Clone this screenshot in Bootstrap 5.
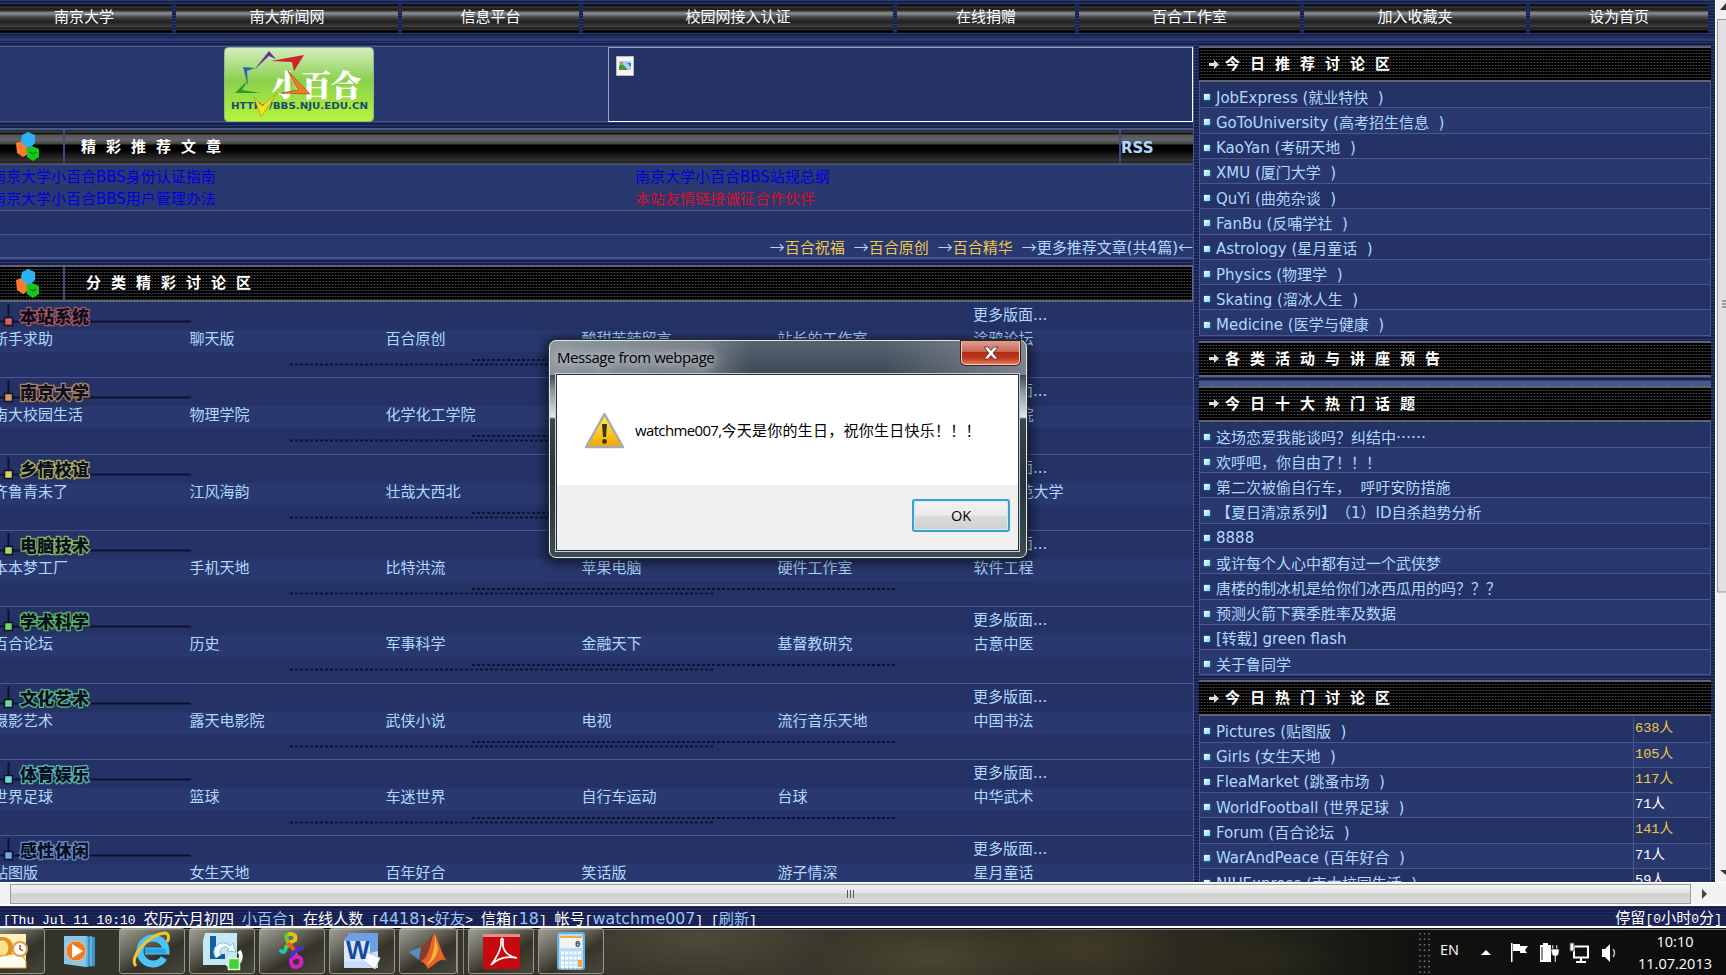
<!DOCTYPE html>
<html lang="zh-CN">
<head>
<meta charset="utf-8">
<title>小百合BBS</title>
<meta name="viewport" content="width=device-width, initial-scale=1">
<link href="https://cdn.jsdelivr.net/npm/bootstrap@5.3.0/dist/css/bootstrap.min.css" rel="stylesheet">
<style>
:root{--line:#48588f;--deep:#243266;--lift:#29396f;--ink:#b0d8ff}
body{width:1726px;height:975px;overflow:hidden;font:15px/20px "DejaVu Sans","Noto Sans CJK SC",sans-serif;color:var(--ink);background:#1a2350;position:relative;text-spacing-trim:space-all}
a{color:inherit;text-decoration:none}
.cjk{font-family:"Noto Sans CJK SC",sans-serif}
.stripes{background:repeating-linear-gradient(#2a3970 0 1px,#18214e 1px 3px)}
.viewport{height:882px}
.page-area{width:1715px}
.topnav{height:38px;padding-top:4px;padding-right:7px}
.topnav a{height:29px;line-height:27px;color:#fff;margin-left:4px;text-align:center;background:linear-gradient(#111 0 2px,#3c3c3e 3px,#1b1b1b 5px,#353536 7px,#77777a 8px,#8a8a8e 10px,#565658 12px,#2c2c2d 16px,#202020 18px,#3a3a3a 22px,#444 23px,#050505 24px,#3c3c3c 25px,#000 27px 28px,#111)}
.topnav a:first-child{margin-left:0;padding-right:4px}
.rule-gap{height:8px;background:linear-gradient(#2b3a72 0 3px,#171f4a 3px 4px,#2a3970 4px 5px,#171f4a 5px 7px,#2a3970 7px)}
.main-col{width:1193px}
.banner{height:76px;border-top:1px solid var(--line);border-bottom:1px solid var(--line);background:var(--lift)}
.logo-cell{width:608px;padding-left:224px}
.logo-cell svg{display:block;width:150px;height:75px}
.ad-box{width:585px;height:75px;border:1px solid #fff;border-top-color:#9aa3bd;border-left-color:#9aa3bd;background:var(--deep);padding:8px 7px}
.gap-stripe{height:6px}
.gap-stripe.short{height:5px}
.gap-stripe.slim{height:4px}
.glossy{height:37px;border-top:2px solid var(--line);border-bottom:1px solid var(--line);color:#fff;font-weight:700;background:linear-gradient(#2a2a2a 0 1px,#4a4a4a 2px,#151515 3px 4px,#555558 5px,#646467 10px,#404042 14px,#000 15px 20px,#101010 23px,#262626 28px,#383838 31px,#111 32px,#444 33px)}
.rss{width:74px;color:var(--ink);border-left:2px solid #414b78;padding-top:2px}
.mesh{height:36px;border-top:2px solid #5f6372;border-bottom:2px solid #5f6372;color:#fff;font-weight:700;background:repeating-linear-gradient(90deg,rgba(0,0,0,.62) 0 2px,transparent 2px 3px),repeating-linear-gradient(#000 0 2px,#4a4a4a 2px 3px),#111}
.mesh.main-mesh{height:37px;border-right:1px solid #5f6372}
.spaced{letter-spacing:10px;white-space:nowrap}
.ball-cell{width:65px;border-right:2px solid #414b78;padding-top:2px}
.ball-cell svg{display:block}
.intro{height:46px;background:var(--lift);color:#0000e0;padding-top:1px;white-space:nowrap;border-bottom:1px solid var(--line)}
.intro>div{line-height:22px}
.intro-left{width:635px}
.pull{margin-left:-9px}
.red-link{color:#d8102c}
.blank-row{height:24px;background:var(--deep);border-bottom:1px solid var(--line)}
.links-row{height:24px;background:var(--lift);border-bottom:2px solid var(--line);line-height:23px;white-space:nowrap;gap:9px}
.gold{color:#efc84a}
.sec{height:76.33px;background:var(--deep);border-bottom:1.5px solid var(--line)}
.sec-head{height:28px}
.sec-head svg{display:block;width:195px;height:28px;overflow:visible}
.sec-head a{width:220px;line-height:27px}
.sec-cells{height:22px;line-height:19px;white-space:nowrap;background:var(--lift)}
.sec-cells a{width:196px;flex:none}
.sec-cells a:first-child{margin-left:-7px;width:196.5px}
.sec-badge{font-weight:900;font-size:17px}
.dots{height:8px;margin-top:6px;display:block}
#cat-title{margin-left:21px;margin-top:-2px}
.side-gutter{width:6px;border-left:1px solid var(--line)}
.side{width:512px}
.side-title{padding-left:10px}
.side-title svg{margin-right:6px}
.light-gap{height:5px;background:var(--line)}
.side-list{margin:0;padding:1px 0 0;list-style:none;border-left:1px solid var(--line);border-right:1px solid var(--line);background:var(--deep)}
.side-list li{height:25.27px;border-bottom:1.5px solid var(--line);background:var(--lift);display:flex;align-items:center;padding-left:4px;line-height:23px;white-space:nowrap}
.side-list li:nth-child(odd){background:var(--deep)}
.side-list li:before{content:"";width:6px;height:6px;background:linear-gradient(135deg,#fff,#6fd6f2);box-shadow:0 0 2px #39a9d8;margin-right:6px;margin-top:4px;flex:none}
.side-list li>.label-text{padding-top:6px}
.pop{margin-left:auto;width:77px;height:100%;border-left:1px solid var(--line);padding-left:1px;font-family:"Liberation Mono","Noto Sans CJK SC",monospace;font-size:13.6px;line-height:24px;color:#fff}
.pop.gold{color:#efc84a}
.vbar{width:11px;height:882px;background:#f0f0f0;border-left:1px solid #fff}
.hbar{height:24px;background:#f2f2f2;border-top:1px solid #fff;padding:1px 15px 0 10px;border-bottom:2px solid #fff}
.thumb{height:20px;width:1682px;border:1px solid #9b9b9b;background:linear-gradient(#f2f2f2,#e2e2e2 45%,#cfcfd1 50%,#dadada)}
.status{height:20px;background:repeating-linear-gradient(#202c60 0 1px,#171f4c 1px 3px);color:#fff;font:13px/26px "Liberation Mono","Noto Sans CJK SC",monospace;white-space:pre;padding:0 4px 0 3px;overflow:hidden}
.status .cj{font-size:15.1px}
.status .ln{color:#9cc4f8;font-family:"DejaVu Sans","Noto Sans CJK SC",sans-serif;font-size:15.2px}
.status .num{font-size:15.8px}
.taskbar{height:49px;border-top:2px solid #fff;background:radial-gradient(ellipse 130px 40px at 700px 10px,#4c4a38,transparent),radial-gradient(ellipse 120px 40px at 930px 30px,#494630,transparent),radial-gradient(ellipse 100px 40px at 1080px 20px,#413c27,transparent),radial-gradient(ellipse 90px 30px at 1250px 30px,#2b2a1b,transparent),linear-gradient(90deg,#33332a 0,#3b392d 45%,#2b291f 70%,#11120f 82%,#0b0c0d);color:#fff;box-shadow:inset 0 1px #111,inset 0 2px #777}
.tb{width:66px;height:46px;margin-left:4px;border:1px solid #99968c;border-radius:3px;background:linear-gradient(150deg,rgba(225,225,215,.62),rgba(120,118,105,.5) 42%,rgba(50,48,38,.5) 60%,rgba(90,88,75,.5));display:flex;justify-content:center;align-items:center;flex:none}
.tb svg{display:block}
.tb.first{margin-left:-21px}
.tb.plain{border-color:transparent;background:none;margin-left:2px;margin-right:2px}
.tb.mat{width:58px}
.stack{width:7px;height:46px;border-right:1px solid #8b887c;border-left:1px solid #8b887c}
.tray{font:14.5px/22px "Open Sans","Noto Sans",sans-serif}
.en{margin:11px 0 0 9px;width:41px}
.icons{margin-top:13px;margin-right:4px}
.clock{width:100px;margin-top:3px;margin-right:1px}
.dlg{position:absolute;left:549px;top:340px;width:478px;height:218px;border-radius:7px;border:1px solid #dfe6ea;background:linear-gradient(90deg,rgba(150,158,166,.9),rgba(130,138,146,.8) 32%,rgba(60,74,92,0) 42%,rgba(70,82,98,0) 70%,rgba(140,146,154,.8)) 0 0/100% 34px no-repeat,linear-gradient(#58636f 0,#3b4857 34px,#8c959c 50px,#e2e6e8 76px,#3a464e 78px,#26343c 140px,#3d4b53);box-shadow:0 0 0 1px #222c33,0 2px 12px 4px rgba(0,0,0,.55);padding:0 7px 7px 6px;font:15px/20px "Open Sans","Noto Sans CJK SC",sans-serif;color:#000}
.dlg-title{height:33px;line-height:33px}
.dlg-title span{letter-spacing:-.45px;padding-left:1px;text-shadow:0 0 8px #cfd5da,0 0 12px #cfd5da}
.dlg-close{width:59px;height:24px;border:1px solid #f0d0c8;border-top:0;border-radius:0 0 5px 5px;background:linear-gradient(#dda093,#cc6a58 45%,#b02c14 50%,#c03a1e 75%,#e07a58);box-shadow:0 0 0 1px #3b2020;margin-right:-1px;display:flex;justify-content:center;align-items:center}
.dlg-body{height:177px;border:1px solid #27333b;outline:1px solid #c7d0d6;background:#fff}
.dlg-msg{height:110px;padding-left:27px;white-space:nowrap}
.msg-text{margin-left:10px;letter-spacing:.25px}
.msg-text span{letter-spacing:-.65px}
.dlg-foot{height:65px;background:#f0f0f0;padding:14px 8px 0 0;display:flex;justify-content:flex-end}
.dlg-foot button{width:98px;height:33px;border:2px solid #3ca0c8;border-radius:3px;background:linear-gradient(#f2f2f2,#ebebeb 48%,#dcdcdc 52%,#cfcfcf);padding:0;font-size:14.5px;color:#000;box-shadow:inset 0 0 0 1px #c9eefb}
</style>
</head>
<body class="d-flex flex-column">
<svg width="0" height="0" class="position-absolute"><defs>
 <linearGradient id="lg" x2="0" y2="1"><stop stop-color="#d5efc0"/><stop offset=".45" stop-color="#8bd04d"/><stop offset="1" stop-color="#b7f53a"/></linearGradient>
 <symbol id="balls" viewBox="0 0 24 30"><path d="M0 11l6-2 6 4v9l-5 3-6-4z" fill="#ff7a2e"/><path d="M6 3l6-3 7 3v8l-5 5-7-3-2-5z" fill="#29b2f6"/><path d="M10 17l6-3 7 3v8l-6 4-6-4z" fill="#14c81c"/><path d="M14 20l3 2 3-2" stroke="#087a10" stroke-width="1.500" fill="none"/></symbol>
 <symbol id="arr" viewBox="0 0 10 9"><path d="M0 3h5V0l5 4.500L5 9V6H0z" fill="#ddd"/></symbol>
</defs></svg>

<div class="viewport d-flex overflow-hidden">
 <div class="page-area stripes">
  <nav class="topnav d-flex stripes" id="topnav"></nav>
  <div class="rule-gap"></div>
  <div class="d-flex">
   <main class="main-col">
    <div class="banner d-flex">
     <div class="logo-cell">
      <svg viewBox="0 0 150 75"><rect x=".5" y=".5" width="149" height="74" rx="4" fill="url(#lg)" stroke="#8db98a"/>
       <text x="48" y="49" font-family="Noto Serif CJK SC,Noto Sans CJK SC,sans-serif" font-weight="900" font-size="30" fill="#fff" textLength="89" stroke="#fff" stroke-width=".4">小百合</text>
       <text x="7" y="61.500" font-family="DejaVu Sans,sans-serif" font-weight="700" font-size="8.500" fill="#1b4b6a" textLength="137" lengthAdjust="spacingAndGlyphs">HTTP://BBS.NJU.EDU.CN</text>
       <path d="M30 23L45 4l7 8-7-3z" fill="#6a2f9c"/><path d="M47 14l33-6-10 16-2-9z" fill="#d0202c"/><path d="M19 20l12 1-8 3 1 15z" fill="#2a66b4"/><path d="M11 46l13-13-6 10 19 3z" fill="#279a2c"/><path d="M64 24l22 23-28-1 16-3z" fill="#f27a1c" stroke="#a84a12" stroke-width=".7"/><path d="M30 50l8 9 15-13-16 24z" fill="#f2e21c" stroke="#a89a10" stroke-width=".7"/></svg>
     </div>
     <div class="ad-box"><svg width="18" height="20" viewBox="0 0 18 20" class="d-block"><path d="M.5.500h17v19H.5z" fill="#f5f5f5" stroke="#bbb"/><path d="M3 5h12v9H3z" fill="#a9cdf5"/><path d="M3 14v-4l3-3 4 5 2 2z" fill="#3f9a36"/><path d="M3 6h4v4z" fill="#d58a3a"/><path d="M11 7h4v4z" fill="#4668d0"/></svg></div>
    </div>
    <div class="gap-stripe stripes"></div>
    <div class="glossy d-flex align-items-center">
     <div class="ball-cell h-100"><svg width="24" height="30" class="ms-3"><use href="#balls"/></svg></div>
     <div class="spaced flex-grow-1 ps-3">精彩推荐文章</div>
     <a href="#" class="rss h-100 d-flex align-items-center">RSS</a>
    </div>
    <div class="intro d-flex"><div class="intro-left"><div class="pull">南京大学小百合BBS身份认证指南</div><div class="pull">南京大学小百合BBS用户管理办法</div></div><div><div>南京大学小百合BBS站规总纲</div><div class="red-link">本站友情链接诚征合作伙伴</div></div></div>
    <div class="blank-row"></div>
    <div class="links-row d-flex justify-content-end"><span><span class="cjk">→</span><a href="#" class="gold">百合祝福</a></span><span><span class="cjk">→</span><a href="#" class="gold">百合原创</a></span><span><span class="cjk">→</span><a href="#" class="gold">百合精华</a></span><span><span class="cjk">→</span>更多推荐文章(共4篇)<span class="cjk">←</span></span></div>
    <div class="gap-stripe stripes"></div>
    <div class="mesh main-mesh d-flex align-items-center">
     <div class="ball-cell h-100"><svg width="24" height="30" class="ms-3"><use href="#balls"/></svg></div>
     <div class="spaced" id="cat-title">分类精彩讨论区</div>
    </div>
    <div id="sections"></div>
   </main>
   <div class="side-gutter"></div>
   <aside class="side" id="side"></aside>
  </div>
 </div>
 <div class="vbar"><svg width="10" height="882" class="d-block"><path d="M4 10l6-7v7z" fill="#333"/><path d="M1.500 19.500H12V592H1.500z" fill="#e2e2e4" stroke="#999"/><path d="M6 301h4M6 304h4M6 307h4" stroke="#555"/><path d="M4 870h6v5z" fill="#333"/></svg></div>
</div>

<div class="hbar d-flex"><div class="thumb d-flex justify-content-center align-items-center"><svg width="9" height="8"><path d="M1.500 0v8M4.500 0v8M7.500 0v8" stroke="#555"/></svg></div><svg width="20" height="20" class="flex-shrink-0"><path d="M11 5l5 5-5 5z" fill="#444"/></svg></div>
<div class="status d-flex justify-content-between"><div>[Thu Jul 11 10:10 <span class="cj">农历六月初四</span> <span class="ln">小百合</span>] <span class="cj">在线人数</span> [<span class="ln num">4418</span>]&lt;<span class="ln">好友</span>&gt; <span class="cj">信箱</span>[<span class="ln num">18</span>] <span class="cj">帐号</span>[<span class="ln num">watchme007</span>] [<span class="ln">刷新</span>]</div><div><span class="cj">停留</span>[0<span class="cj">小时</span>0<span class="cj">分</span>]</div></div>

<footer class="taskbar d-flex">
 <div class="d-flex">
  <div class="tb first"><svg width="44" height="38" viewBox="0 0 44 38"><path d="M6 2h30v34H6z" fill="#fbe28c"/><path d="M6 2h30v8H6z" fill="#fff1b8"/><text x="0" y="27" font-family="Liberation Sans" font-weight="700" font-size="31" fill="#e0901c">O</text><path d="M7 25l22-4 7 8v7H7z" fill="#fffdf0" stroke="#e7a33a"/><circle cx="30" cy="17" r="7" fill="#fff" stroke="#d8a05a" stroke-width="2"/><path d="M30 13v4l3 2" stroke="#a84a1c" fill="none" stroke-width="1.500"/></svg></div>
  <div class="tb plain"><svg width="34" height="34" viewBox="0 0 34 34"><path d="M22 2l10 1v29l-10 1z" fill="#3a94c6"/><path d="M24 2v31M28 2v30" stroke="#8ed2f2"/><path d="M1 2h22v31L1 30z" fill="#8ac6e8"/><circle cx="13" cy="17" r="10" fill="#f07a20" stroke="#f8c090"/><path d="M9 10l11 7-11 7z" fill="#fff"/></svg></div>
  <div class="tb"><svg width="42" height="40" viewBox="0 0 42 40"><path d="M33 27a13 13 0 1 1 2-7H14" fill="none" stroke="#4cc4f5" stroke-width="7"/><path d="M5 35C-3 27 17 4 33 2c6 0 5 6 3 9" fill="none" stroke="#f5c62c" stroke-width="3"/><path d="M14 20h21" stroke="#29a5e6" stroke-width="5"/></svg></div>
  <div class="tb"><svg width="42" height="40" viewBox="0 0 42 40"><path d="M4 2h32v32H2V10z" fill="#c5e8f2"/><path d="M9 5h6v18h9v5H9z" fill="#135e9e"/><path d="M15 27a9 9 0 0 1 14-12l3-3 3 9-9-1 2-2a5 5 0 0 0-8 6" fill="#f3fbfd" stroke="#7cc3d9"/><path d="M38 20a9 9 0 0 1-12 13" stroke="#f3fbfd" stroke-width="4" fill="none"/><path d="M27.500 27.500h11v11h-11z" fill="#43cf36" stroke="#dfffd0" stroke-width="1.500"/></svg></div>
  <div class="tb"><svg width="30" height="40" viewBox="0 0 30 40" fill="none" stroke-width="4" stroke-linecap="round"><path d="M4 20q4 3 5-4" stroke="#18c7b4"/><path d="M9 16q4-1 2-5Q7 3 13 3" stroke="#63cc2c"/><path d="M13 3q7 0 5 6l-6 3" stroke="#dbc51c"/><path d="M12 13q6 5 7 13" stroke="#f05a28"/><path d="M25 17q-10 2-11 13" stroke="#4a2fd6"/><path d="M14 29q0 7 5 7 7-1 5-8-3-4-7-1" stroke="#d41fc4"/></svg></div>
  <div class="tb"><svg width="40" height="38" viewBox="0 0 40 38"><path d="M8 1h28v35H2V8z" fill="#c7dcf8"/><path d="M8 1h28v18L2 28V8z" fill="#6f9fe6"/><path d="M2 9h26v21H2z" fill="#d8e8fb"/><path d="M20 28l4-8 14 6-5 11z" fill="#f9fbff" stroke="#b7cbe8"/><text x="4" y="27" font-family="Liberation Sans" font-weight="700" font-size="25" fill="#17479e">W</text></svg></div>
  <div class="tb mat"><svg width="40" height="38" viewBox="0 0 40 38"><path d="M1 20l12-5 8 7-10 6z" fill="#4f91c9"/><path d="M13 15c6-3 9-10 13-14l-5 24-6 6-4-4z" fill="#8a3c2a"/><path d="M26 1c4 4 7 21 13 28-7-4-10 2-19 8-2-4-4-7-8-8 9-1 10-18 14-28z" fill="#e8622c"/><path d="M27 3c0 12-2 24-9 30 5-1 11-9 12-16z" fill="#f9b73a"/></svg></div>
  <div class="stack"></div>
  <div class="tb"><svg width="37" height="36" viewBox="0 0 37 36"><path d="M0 1h37v35H0z" fill="#c50a10"/><path d="M0 1h37v3H0z" fill="#e98a88"/><path d="M8 32C12 27 19 16 18 8c0-4 3-3 2 1-1 9 5 14 14 16-9-2-19 0-26 7z" fill="none" stroke="#fff" stroke-width="1.700"/></svg></div>
  <div class="tb"><svg width="28" height="38" viewBox="0 0 28 38"><rect x="1" y="1" width="26" height="36" rx="2" fill="#b9dcf5" stroke="#6aaede" stroke-width="2"/><path d="M3 6h22v10H3z" fill="#eef4f3"/><path d="M3 4h22v2H3z" fill="#f3a94a"/><text x="18" y="15" font-family="Liberation Mono" font-size="9" font-weight="700" fill="#333">0</text><path d="M4 21h20M4 26h20M4 31h20M4 35h20" stroke="#fff" stroke-width="3" stroke-dasharray="3 1.200"/><path d="M21 28h4v7h-4z" fill="#f3a33a"/></svg></div>
 </div>
 <div class="tray d-flex ms-auto">
  <svg width="12" height="44" class="mt-1"><path d="M1 1v44M5.500 1v44M10 1v44" stroke="#77777a" stroke-width="1.500" stroke-dasharray="1.500 4"/></svg>
  <span class="en">EN</span>
  <svg width="140" height="24" viewBox="0 0 140 24" class="icons" fill="#fff"><path d="M0 14l5-5 5 5z"/><path d="M30 2h1.500v19H30zM32 3h7v2h8l-3 4 2 3h-7v-2h-7z"/><path d="M59 4h3V2h5v2h3v17H59z"/><path d="M61 6v13" stroke="#222"/><path d="M70 8h8v3q0 4-3 4v6h-1.500v-6q-3 0-3-4zM71 4h1.500v4H71zM75 4h1.500v4H75z" stroke="#111" stroke-width=".5"/><path d="M93 5.500h14v11H93zM100 17v3M95 21h10" fill="none" stroke="#fff" stroke-width="2"/><path d="M89 2h4v8h-4z" stroke="#555"/><path d="M121 8h3l5-5v18l-5-5h-3z"/><path d="M132 8q3 4 0 8" fill="none" stroke="#bbb" stroke-width="1.500"/></svg>
  <div class="clock text-center">10:10<br>11.07.2013</div>
 </div>
</footer>

<div class="dlg" role="alertdialog">
 <div class="dlg-title d-flex justify-content-between"><span>Message from webpage</span><div class="dlg-close"><svg width="16" height="14" viewBox="0 0 16 14"><path d="M1 1h4l3 3.500L11 1h4l-5 6 5 6h-4L8 9.500 5 13H1l5-6z" fill="#fff" stroke="#4c2a2a" stroke-width=".8"/></svg></div></div>
 <div class="dlg-body"><div class="dlg-msg d-flex align-items-center"><svg width="41" height="37" viewBox="0 0 41 37"><defs><linearGradient id="wy" x2="0" y2="1"><stop stop-color="#fff04a"/><stop offset="1" stop-color="#f5a800"/></linearGradient></defs><path d="M20.500 2L39 35H2z" fill="url(#wy)" stroke="#a9abb0" stroke-width="2.500" stroke-linejoin="round"/><path d="M18 12h5l-1 13h-3z" fill="#3a3520"/><circle cx="20.500" cy="29.500" r="2.400" fill="#3a3520"/></svg><span class="msg-text"><span>watchme007,</span>今天是你的生日，祝你生日快乐！！！</span></div>
 <div class="dlg-foot"><button>OK</button></div></div>
</div>

<script>
const el = id => document.getElementById(id);
el('topnav').innerHTML = [['南京大学',172],['南大新闻网',222],['信息平台',177],['校园网接入认证',310],['在线捐赠',178],['百合工作室',221],['加入收藏夹',222],['设为首页',178]]
 .map(([t,w])=>`<a href="#" style="width:${w}px">${t}</a>`).join('');

const secs = [
 ['本站系统','#d4625c',['新手求助','聊天版','百合原创','酸甜苦辣留言','站长的工作室','涂鸦论坛']],
 ['南京大学','#d49860',['南大校园生活','物理学院','化学化工学院','天文学系','商学院','外国学院']],
 ['乡情校谊','#d4d060',['齐鲁青未了','江风海韵','壮哉大西北','巴山蜀水','三湘四水','东北师范大学']],
 ['电脑技术','#a4dc60',['本本梦工厂','手机天地','比特洪流','苹果电脑','硬件工作室','软件工程']],
 ['学术科学','#6cdc60',['百合论坛','历史','军事科学','金融天下','基督教研究','古意中医']],
 ['文化艺术','#6cdc90',['摄影艺术','露天电影院','武侠小说','电视','流行音乐天地','中国书法']],
 ['体育娱乐','#6cdcc8',['世界足球','篮球','车迷世界','自行车运动','台球','中华武术']],
 ['感性休闲','#78a4e0',['贴图版','女生天地','百年好合','笑话版','游子情深','星月童话']]];
el('sections').innerHTML = secs.map(([t,c,items])=>`<section class="sec"><div class="sec-head d-flex justify-content-between">
<svg><path d="M8.500 2v22M0 19.500h191" stroke="#0c1230" stroke-width="2"/><rect x="4.500" y="15.500" width="8" height="8" fill="${c}" stroke="#0c1230" stroke-width="1.500"/><text class="sec-badge" x="20" y="21" textLength="69" fill="#0a0f22" stroke="${c}" stroke-width="2.500" stroke-opacity=".8" paint-order="stroke">${t}</text></svg><a href="#">更多版面...</a></div>
<div class="sec-cells d-flex">${items.map(x=>`<a href="#">${x}</a>`).join('')}</div>
<svg class="dots" width="1000" height="8"><path d="M472 2h423M290 6.500h423" stroke="#0b1130" stroke-width="1.800" stroke-dasharray="3 2"/></svg></section>`).join('');

const head = t => `<div class="mesh side-title d-flex align-items-center"><svg width="10" height="9"><use href="#arr"/></svg><span class="spaced">${t}</span></div>`;
const list = rows => `<ul class="side-list">${rows.join('')}</ul>`;
const board = (n,c,p) => `<li><span class="label-text">${n} (${c}&nbsp;&nbsp;)</span>${p?`<span class="pop ${p>100?'gold':''}">${p}人</span>`:''}</li>`;
const gap = k => `<div class="gap-stripe stripes ${k}"></div>`;
el('side').innerHTML =
 head('今日推荐讨论区') +
 list([['JobExpress','就业特快'],['GoToUniversity','高考招生信息'],['KaoYan','考研天地'],['XMU','厦门大学'],['QuYi','曲苑杂谈'],['FanBu','反哺学社'],['Astrology','星月童话'],['Physics','物理学'],['Skating','溜冰人生'],['Medicine','医学与健康']].map(r=>board(...r))) +
 gap('short') + head('各类活动与讲座预告') +
 gap('slim') + '<div class="light-gap"></div>' + head('今日十大热门话题') +
 list(['这场恋爱我能谈吗？纠结中<span class="cjk">……</span>','欢呼吧，你自由了！！！','第二次被偷自行车，&nbsp;&nbsp;呼吁安防措施','【夏日清凉系列】（1）ID自杀趋势分析','8888','或许每个人心中都有过一个武侠梦','唐楼的制冰机是给你们冰西瓜用的吗？？？','预测火箭下赛季胜率及数据','[转载] green flash','关于鲁同学'].map(t=>`<li><a href="#" class="label-text">${t}</a></li>`)) +
 gap('short') + head('今日热门讨论区') +
 list([['Pictures','贴图版',638],['Girls','女生天地',105],['FleaMarket','跳蚤市场',117],['WorldFootball','世界足球',71],['Forum','百合论坛',141],['WarAndPeace','百年好合',71],['NJUExpress','南大校园生活',59]].map(r=>board(...r)));
</script>
<script src="https://cdn.jsdelivr.net/npm/bootstrap@5.3.0/dist/js/bootstrap.bundle.min.js"></script>
</body>
</html>
